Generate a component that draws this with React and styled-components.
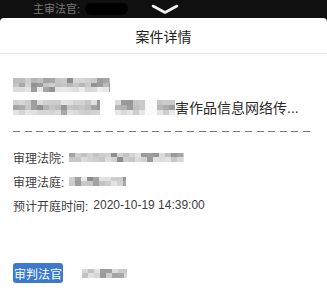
import React from 'react';
import styled, { createGlobalStyle } from 'styled-components';

const Global = createGlobalStyle`
  html, body { margin: 0; padding: 0; background: #fff; }
  body {
    width: 327px; height: 297px; overflow: hidden;
    font-family: "Liberation Sans", "Noto Sans CJK SC", sans-serif;
  }
`;

const Screen = styled.div`
  width: 327px;
  height: 297px;
  display: flex;
  flex-direction: column;
  background: #101010;
  overflow: hidden;
`;

const TopBar = styled.div`
  height: 18px;
  flex: none;
  display: flex;
  align-items: center;
  padding-left: 33px;
`;

const DimLabel = styled.span`
  font-size: 11px;
  line-height: 18px;
  color: #7a7a7a;
`;

const BlackPill = styled.span`
  width: 43px;
  height: 12px;
  border-radius: 6px;
  background: #000;
  margin-left: 5px;
`;

const Chevron = styled.svg`
  margin-left: 23px;
  display: block;
`;

const Sheet = styled.div`
  flex: 1;
  background: #fff;
  border-radius: 4px 4px 0 0;
  display: flex;
  flex-direction: column;
`;

const Header = styled.div`
  height: 35px;
  flex: none;
  display: flex;
  align-items: center;
  justify-content: center;
  font-size: 14px;
  color: #222;
  border-bottom: 1px solid #e6e6e6;
`;

const Body = styled.div`
  padding: 20px 12px 0 13px;
  display: flex;
  flex-direction: column;
`;

const CaseLine = styled.div`
  height: 22px;
  display: flex;
  align-items: center;
  font-size: 14px;
  color: #2a2a2a;
  white-space: nowrap;
`;

const Gap = styled.span`
  width: ${p => p.$w}px;
  flex: none;
`;

const Dashed = styled.div`
  height: 1px;
  margin-top: 13px;
  margin-bottom: 13px;
  background: repeating-linear-gradient(90deg, #7a7a7a 0 7px, transparent 7px 11.6px);
`;

const InfoRow = styled.div`
  height: 24px;
  display: flex;
  align-items: center;
  font-size: 12px;
  color: #3c3c3c;
  white-space: nowrap;
`;

const Value = styled.span`
  margin-left: 5px;
  display: flex;
  align-items: center;
`;

const Footer = styled.div`
  margin-top: 46px;
  display: flex;
  align-items: center;
`;

const Badge = styled.span`
  height: 20px;
  padding: 0 1px;
  display: flex;
  align-items: center;
  background: #3b7ad0;
  color: #fff;
  font-size: 12px;
  border-radius: 3px;
`;

const MosaicGrid = styled.span`
  display: grid;
  flex: none;
  overflow: hidden;
  filter: blur(0.6px);
`;

const Cell = styled.span`
  display: block;
`;

function rng(seed) {
  let s = seed;
  return () => {
    s = (s * 16807) % 2147483647;
    return s / 2147483647;
  };
}

function Mosaic({ w, h, cw = 6, rows, seed = 7, whiteFrom, whiteTo }) {
  const cols = Math.ceil(w / cw);
  const r = rng(seed * 9973 + 11);
  const rh = h / rows.length;
  const cells = [];
  rows.forEach(([lo, hi, pd], ri) => {
    for (let c = 0; c < cols; c++) {
      let v = lo + r() * (hi - lo);
      if (r() < pd) v = 140 + r() * 30;
      const x = c * cw;
      if (whiteFrom !== undefined && x >= whiteFrom && x < whiteTo) v = 250;
      const g = Math.round(v);
      cells.push(
        <Cell key={ri + '-' + c} style={{ background: `rgb(${g},${g},${g})` }} />
      );
    }
  });
  return (
    <MosaicGrid
      style={{
        width: w,
        height: h,
        gridTemplateColumns: `repeat(${cols}, ${cw}px)`,
        gridTemplateRows: `repeat(${rows.length}, ${rh}px)`,
      }}
    >
      {cells}
    </MosaicGrid>
  );
}

export default function App() {
  return (
    <>
      <Global />
      <Screen>
        <TopBar>
          <DimLabel>主审法官:</DimLabel>
          <BlackPill />
          <Chevron width="28" height="10" viewBox="0 0 28 10">
            <path d="M2 2 Q14 8.5 14 8.5 Q14 8.5 26 2" fill="none" stroke="#f2f2f2" strokeWidth="2.6" strokeLinecap="round" strokeLinejoin="round" />
          </Chevron>
        </TopBar>
        <Sheet>
          <Header>案件详情</Header>
          <Body>
            <CaseLine>
              <Mosaic w={97} h={14} seed={3} rows={[[180, 215, 0.3], [175, 212, 0.35], [215, 240, 0.25]]} />
            </CaseLine>
            <CaseLine>
              <Mosaic w={87} h={15} seed={5} rows={[[195, 230, 0.2], [170, 210, 0.4], [205, 235, 0.15]]} />
              <Gap $w={15} />
              <Mosaic w={60} h={15} seed={9} whiteFrom={30} whiteTo={42} rows={[[195, 230, 0.2], [165, 205, 0.45], [205, 235, 0.15]]} />
              害作品信息网络传...
            </CaseLine>
            <Dashed />
            <InfoRow>
              审理法院:
              <Value>
                <Mosaic w={115} h={9} seed={13} rows={[[185, 225, 0.3], [195, 230, 0.25]]} />
              </Value>
            </InfoRow>
            <InfoRow>
              审理法庭:
              <Value>
                <Mosaic w={57} h={9} seed={17} rows={[[195, 235, 0.2], [190, 230, 0.3]]} />
              </Value>
            </InfoRow>
            <InfoRow>
              预计开庭时间:
              <Value>2020-10-19 14:39:00</Value>
            </InfoRow>
            <Footer>
              <Badge>审判法官</Badge>
              <Gap $w={19} />
              <Mosaic w={45} h={9} seed={21} rows={[[195, 230, 0.25], [190, 228, 0.3]]} />
            </Footer>
          </Body>
        </Sheet>
      </Screen>
    </>
  );
}
